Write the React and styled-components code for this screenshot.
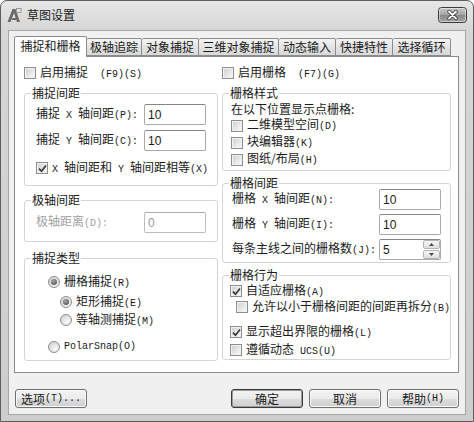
import React from 'react';
import styled, { createGlobalStyle } from 'styled-components';

const GlobalStyle = createGlobalStyle`
  html, body { margin: 0; padding: 0; background: #fff; }
  body {
    width: 474px; height: 422px; overflow: hidden;
    font-family: "Noto Sans CJK SC", "Liberation Sans", sans-serif;
    font-size: 12px; color: #1a1a1a;
  }
  * { box-sizing: border-box; }
`;

const Window = styled.div`
  width: 474px;
  height: 422px;
  border: 1px solid #5e5e5e;
  border-radius: 7px 7px 0 0;
  background: linear-gradient(#e6e6e6, #d6d6d6 30px, #cdcdcd);
  display: flex;
  flex-direction: column;
`;

const TitleBar = styled.div`
  height: 29px;
  flex: none;
  padding: 0 6px 1px 5px;
  display: flex;
  align-items: center;
  gap: 5px;
`;

const TitleText = styled.span`
  flex: 1;
  font-size: 12px;
  line-height: 16px;
  color: #1c1c1c;
`;

const Frame = styled.div`
  flex: 1;
  padding: 0 7px 6px 7px;
  display: flex;
  flex-direction: column;
`;

const Client = styled.div`
  flex: 1;
  background: #f0f0f0;
  border: 1px solid #a6a6a6;
  padding: 5px 6px 0 5px;
  display: flex;
  flex-direction: column;
`;

const TabRow = styled.div`
  display: flex;
  align-items: flex-end;
  height: 20px;
  position: relative;
  z-index: 1;
`;

const Tab = styled.div`
  width: ${p => p.$w}px;
  height: ${p => (p.$active ? 21 : 18)}px;
  margin-bottom: ${p => (p.$active ? -1 : 0)}px;
  border: 1px solid #8c8c8c;
  border-bottom: ${p => (p.$active ? 'none' : '1px solid #8c8c8c')};
  border-left: ${p => (p.$first ? '1px solid #8c8c8c' : 'none')};
  border-radius: 2px 2px 0 0;
  background: ${p => (p.$active ? '#fff' : 'linear-gradient(#f4f4f4, #e4e4e4 50%, #d9d9d9)')};
  display: flex;
  align-items: center;
  justify-content: center;
  line-height: 16px;
  padding-bottom: ${p => (p.$active ? 2 : 0)}px;
`;

const Panel = styled.div`
  width: 445px;
  height: 317px;
  border: 1px solid #8c8c8c;
  background: #fff;
  padding: 8px 7px 0 9px;
  display: flex;
  gap: 4px;
`;

const Column = styled.div`
  width: ${p => p.$w}px;
  display: flex;
  flex-direction: column;
`;

const Group = styled.fieldset`
  margin: ${p => p.$mt}px 0 0 0;
  height: ${p => p.$h}px;
  padding: 0;
  min-width: 0;
  border: 1px solid #d5d5d5;
  border-radius: 3px;
`;

const Legend = styled.legend`
  margin-left: 6px;
  padding: 0 1px;
  line-height: 10px;
  font-size: 12px;
`;

const Body = styled.div`
  padding: ${p => p.$pad};
  display: flex;
  flex-direction: column;
`;

const Row = styled.label`
  display: flex;
  align-items: center;
  gap: 4px;
  height: ${p => p.$h || 16}px;
  margin-top: ${p => p.$mt || 0}px;
  margin-left: ${p => p.$ml || 0}px;
  line-height: 14px;
  white-space: nowrap;
`;

const Text = styled.div`
  height: 16px;
  line-height: 14px;
  padding-top: 1px;
  white-space: nowrap;
`;

const FieldRow = styled.div`
  display: grid;
  grid-template-columns: ${p => p.$label}px 62px;
  align-items: center;
  margin-top: ${p => p.$mt || 0}px;
  white-space: nowrap;
  line-height: 14px;
  color: ${p => (p.$disabled ? '#a2a2a2' : 'inherit')};
`;

const Input = styled.div`
  width: 62px;
  height: 21px;
  border: 1px solid ${p => (p.$disabled ? '#bdbdbd' : '#a9a9a9')};
  border-top-color: ${p => (p.$disabled ? '#aaaaaa' : '#868686')};
  border-radius: 2px;
  background: #fff;
  padding: 0 0 0 3px;
  font-family: "Liberation Sans", sans-serif;
  font-size: 12px;
  line-height: 18px;
  color: ${p => (p.$disabled ? '#9a9a9a' : '#1a1a1a')};
  display: flex;
  align-items: center;
  justify-content: space-between;
`;

const Spin = styled.div`
  width: 17px;
  height: 19px;
  display: flex;
  flex-direction: column;
  gap: 1px;
`;

const SpinBtn = styled.div`
  flex: 1;
  border: 1px solid #b4b4b4;
  border-radius: 2px;
  background: linear-gradient(#f6f6f6, #dedede);
  display: flex;
  align-items: center;
  justify-content: center;
`;

const Lat = styled.span`
  font-family: "Liberation Mono", monospace;
  font-size: 10px;
  white-space: pre;
`;

const Box = styled.span`
  width: 12px;
  height: 12px;
  flex: none;
  border: 1px solid #8e8e8e;
  background: linear-gradient(135deg, #cdcdcd, #eeeeee 70%, #f8f8f8);
  box-shadow: inset 0 0 0 1px #f2f2f2;
  display: flex;
  align-items: center;
  justify-content: center;
`;

const Dot = styled.span`
  width: 12px;
  height: 12px;
  flex: none;
  border-radius: 50%;
  border: 1px solid #8e8e8e;
  background: radial-gradient(circle at 65% 70%, #fafafa, #d4d4d4 80%);
  display: flex;
  align-items: center;
  justify-content: center;

  &::after {
    content: '';
    display: ${p => (p.$on ? 'block' : 'none')};
    width: 6px;
    height: 6px;
    border-radius: 50%;
    background: radial-gradient(circle at 40% 35%, #a8a8a8, #3e3e3e);
  }
`;

const Footer = styled.div`
  margin-top: 16px;
  padding-left: 1px;
  display: flex;
  gap: 6px;
`;

const Button = styled.div`
  width: 72px;
  height: 19px;
  margin-left: ${p => (p.$push ? 'auto' : '0')};
  border: 1px solid ${p => (p.$default ? '#3a3a3a' : '#707070')};
  border-radius: 3px;
  background: linear-gradient(#f3f3f3, #ebebeb 50%, #dcdcdc 51%, #d0d0d0);
  box-shadow: inset 0 0 0 1px ${p => (p.$default ? '#9c9c9c' : '#fbfbfb')};
  display: flex;
  align-items: center;
  justify-content: center;
  line-height: 16px;
  white-space: nowrap;
`;

const Check = ({ on }) => (
  <Box>
    {on && (
      <svg width="9" height="9" viewBox="0 0 9 9">
        <path d="M1 4.6 L3.5 7.2 L8 1.4" fill="none" stroke="#3a3a3a" strokeWidth="1.7" />
      </svg>
    )}
  </Box>
);

const AppIcon = () => (
  <svg width="16" height="16" viewBox="0 0 16 16">
    <path d="M1.5 15 L6.5 2 L9.5 2 L14 15 L11 15 L8 6 L4.5 15 Z" fill="#6a6a6a" />
    <path d="M6.5 11 L10 11 L10.6 13 L5.8 13 Z" fill="#6a6a6a" />
    <rect x="10.5" y="1.5" width="4.5" height="4" fill="#e8e8e8" stroke="#8a8a8a" strokeWidth="0.8" />
  </svg>
);

// close control drawn as one svg: rounded gradient plate with a white cross
const CloseButton = () => (
  <svg width="29" height="16" viewBox="0 0 29 16" style={{ flex: 'none' }}>
    <defs>
      <linearGradient id="closeFill" x1="0" y1="0" x2="0" y2="1">
        <stop offset="0" stopColor="#cacaca" />
        <stop offset="0.48" stopColor="#a4a4a4" />
        <stop offset="0.52" stopColor="#888888" />
        <stop offset="1" stopColor="#a8a8a8" />
      </linearGradient>
    </defs>
    <rect x="0.5" y="0.5" width="28" height="15" rx="3" fill="url(#closeFill)" stroke="#3c3c3c" />
    <rect x="1.5" y="1.5" width="26" height="13" rx="2" fill="none" stroke="#ffffff" strokeOpacity="0.45" />
    <path d="M11 4.5 L18 11.5 M18 4.5 L11 11.5" stroke="#333333" strokeWidth="3.4" strokeLinecap="round" />
    <path d="M11 4.5 L18 11.5 M18 4.5 L11 11.5" stroke="#ffffff" strokeWidth="1.8" strokeLinecap="round" />
  </svg>
);

const tabs = [
  ['捕捉和栅格', 73],
  ['极轴追踪', 55],
  ['对象捕捉', 57],
  ['三维对象捕捉', 80],
  ['动态输入', 57],
  ['快捷特性', 57],
  ['选择循环', 58],
];

export default function App() {
  return (
    <>
      <GlobalStyle />
      <Window>
        <TitleBar>
          <AppIcon />
          <TitleText>草图设置</TitleText>
          <CloseButton />
        </TitleBar>

        <Frame>
          <Client>
            <TabRow>
              {tabs.map(([t, w], i) => (
                <Tab key={t} $w={w} $active={i === 0} $first={i === 0}>{t}</Tab>
              ))}
            </TabRow>

            <Panel>
              <Column $w={194}>
                <Row>
                  <Check />
                  <span>启用捕捉<Lat>  (F9)(S)</Lat></span>
                </Row>

                <Group $mt={7} $h={98}>
                  <Legend>捕捉间距</Legend>
                  <Body $pad="6px 0 0 11px">
                    <FieldRow $label={108}>
                      <span>捕捉<Lat> X </Lat>轴间距<Lat>(P):</Lat></span>
                      <Input>10</Input>
                    </FieldRow>
                    <FieldRow $label={108} $mt={5}>
                      <span>捕捉<Lat> Y </Lat>轴间距<Lat>(C):</Lat></span>
                      <Input>10</Input>
                    </FieldRow>
                    <Row $mt={9}>
                      <Check on />
                      <span><Lat>X </Lat>轴间距和<Lat> Y </Lat>轴间距相等<Lat>(X)</Lat></span>
                    </Row>
                  </Body>
                </Group>

                <Group $mt={9} $h={47}>
                  <Legend>极轴间距</Legend>
                  <Body $pad="7px 0 0 11px">
                    <FieldRow $label={108} $disabled>
                      <span>极轴距离<Lat>(D):</Lat></span>
                      <Input $disabled>0</Input>
                    </FieldRow>
                  </Body>
                </Group>

                <Group $mt={11} $h={108}>
                  <Legend>捕捉类型</Legend>
                  <Body $pad="11px 0 0 23px">
                    <Row>
                      <Dot $on />
                      <span>栅格捕捉<Lat>(R)</Lat></span>
                    </Row>
                    <Row $mt={4} $ml={12}>
                      <Dot $on />
                      <span>矩形捕捉<Lat>(E)</Lat></span>
                    </Row>
                    <Row $mt={2} $ml={12}>
                      <Dot />
                      <span>等轴测捕捉<Lat>(M)</Lat></span>
                    </Row>
                    <Row $mt={11}>
                      <Dot />
                      <Lat>PolarSnap(O)</Lat>
                    </Row>
                  </Body>
                </Group>
              </Column>

              <Column $w={229}>
                <Row>
                  <Check />
                  <span>启用栅格<Lat>  (F7)(G)</Lat></span>
                </Row>

                <Group $mt={7} $h={83}>
                  <Legend>栅格样式</Legend>
                  <Body $pad="3px 0 0 8px">
                    <Text>在以下位置显示点栅格:</Text>
                    <Row $h={17}>
                      <Check />
                      <span>二维模型空间<Lat>(D)</Lat></span>
                    </Row>
                    <Row $h={17}>
                      <Check />
                      <span>块编辑器<Lat>(K)</Lat></span>
                    </Row>
                    <Row $h={17}>
                      <Check />
                      <span>图纸/布局<Lat>(H)</Lat></span>
                    </Row>
                  </Body>
                </Group>

                <Group $mt={7} $h={85}>
                  <Legend>栅格间距</Legend>
                  <Body $pad="1px 0 0 9px">
                    <FieldRow $label={147}>
                      <span>栅格<Lat> X </Lat>轴间距<Lat>(N):</Lat></span>
                      <Input>10</Input>
                    </FieldRow>
                    <FieldRow $label={147} $mt={4}>
                      <span>栅格<Lat> Y </Lat>轴间距<Lat>(I):</Lat></span>
                      <Input>10</Input>
                    </FieldRow>
                    <FieldRow $label={147} $mt={4}>
                      <span>每条主线之间的栅格数<Lat>(J):</Lat></span>
                      <Input>
                        5
                        <Spin>
                          <SpinBtn>
                            <svg width="5" height="3" viewBox="0 0 5 3"><path d="M0 3 L2.5 0 L5 3 Z" fill="#4a4a4a" /></svg>
                          </SpinBtn>
                          <SpinBtn>
                            <svg width="5" height="3" viewBox="0 0 5 3"><path d="M0 0 L2.5 3 L5 0 Z" fill="#4a4a4a" /></svg>
                          </SpinBtn>
                        </Spin>
                      </Input>
                    </FieldRow>
                  </Body>
                </Group>

                <Group $mt={7} $h={90}>
                  <Legend>栅格行为</Legend>
                  <Body $pad="3px 0 0 7px">
                    <Row>
                      <Check on />
                      <span>自适应栅格<Lat>(A)</Lat></span>
                    </Row>
                    <Row $ml={6}>
                      <Check />
                      <span>允许以小于栅格间距的间距再拆分<Lat>(B)</Lat></span>
                    </Row>
                    <Row $mt={9}>
                      <Check on />
                      <span>显示超出界限的栅格<Lat>(L)</Lat></span>
                    </Row>
                    <Row $mt={2}>
                      <Check />
                      <span>遵循动态<Lat> UCS(U)</Lat></span>
                    </Row>
                  </Body>
                </Group>
              </Column>
            </Panel>

            <Footer>
              <Button>选项<Lat>(T)...</Lat></Button>
              <Button $push $default>确定</Button>
              <Button>取消</Button>
              <Button>帮助<Lat>(H)</Lat></Button>
            </Footer>
          </Client>
        </Frame>
      </Window>
    </>
  );
}
